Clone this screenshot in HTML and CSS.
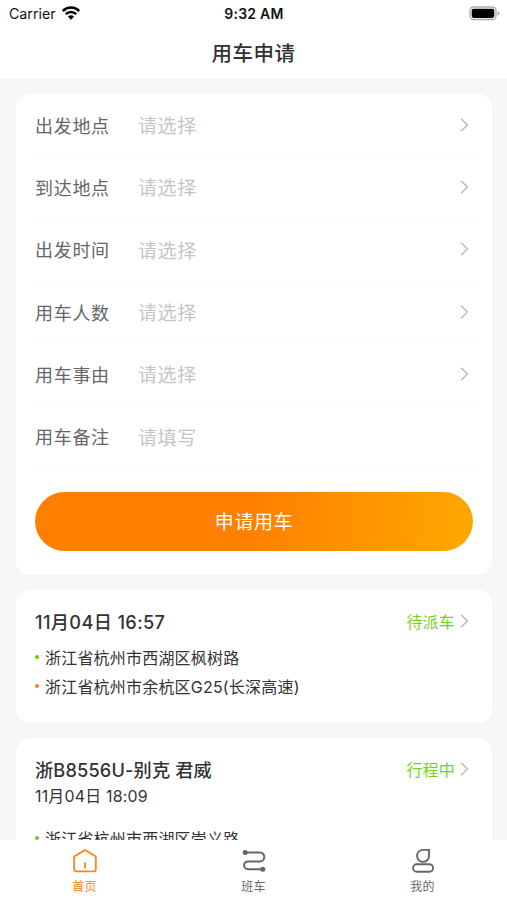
FILE: index.html
```html
<!DOCTYPE html>
<html lang="zh-CN">
<head>
<meta charset="utf-8">
<meta name="viewport" content="width=device-width, initial-scale=1">
<title>用车申请</title>
<link rel="stylesheet" href="styles.css">
</head>
<body>
<svg width="0" height="0" class="defs">
  <symbol id="chevron" viewBox="0 0 9 14"><path d="M1 .7 7.5 7 1 13.3" fill="none" stroke="#b3b3b3" stroke-width="1.2"/></symbol>
</svg>
<div class="app">
  <header class="top">
    <div class="status">
      <div class="carrier"><span>Carrier</span>
        <svg width="18" height="14" viewBox="0 0 18 14" fill="none" stroke="#000" stroke-width="2.5"><path d="M.8 5C5.400.4 12.600.4 17.200 5M3.800 8.200C6.700 5.300 11.300 5.300 14.200 8.200"/><path d="M9 13.700 5.900 10.600Q9 8 12.100 10.600Z" fill="#000" stroke="none"/></svg>
      </div>
      <div class="clock">9:32 AM</div>
      <svg class="battery" width="31" height="15" viewBox="0 0 31 15"><rect x="1" y="1" width="26" height="12.500" rx="3.500" fill="#fff" stroke="#aaa" stroke-width="1.300"/><rect x="2.700" y="2.700" width="22.600" height="9.200" rx="1.800"/><path d="M28.500 5v4.600q2-.7 2-2.300t-2-2.300z" fill="#aaa"/></svg>
    </div>
    <h1>用车申请</h1>
  </header>
  <main>
    <section class="card form">
      <div class="row"><label>出发地点</label><span>请选择</span><svg class="chev"><use href="#chevron"/></svg></div>
      <div class="row"><label>到达地点</label><span>请选择</span><svg class="chev"><use href="#chevron"/></svg></div>
      <div class="row"><label>出发时间</label><span>请选择</span><svg class="chev"><use href="#chevron"/></svg></div>
      <div class="row"><label>用车人数</label><span>请选择</span><svg class="chev"><use href="#chevron"/></svg></div>
      <div class="row"><label>用车事由</label><span>请选择</span><svg class="chev"><use href="#chevron"/></svg></div>
      <div class="row"><label>用车备注</label><span>请填写</span></div>
      <button>申请用车</button>
    </section>
    <section class="card trip">
      <div class="head"><h2>11月04日 16:57</h2><span class="state">待派车</span><svg class="chev"><use href="#chevron"/></svg></div>
      <ul>
        <li>浙江省杭州市西湖区枫树路</li>
        <li class="to">浙江省杭州市余杭区G25(长深高速)</li>
      </ul>
    </section>
    <section class="card trip">
      <div class="head"><h2 class="plate">浙B8556U-别克 君威</h2><span class="state">行程中</span><svg class="chev"><use href="#chevron"/></svg></div>
      <p>11月04日 18:09</p>
      <ul>
        <li>浙江省杭州市西湖区崇义路</li>
      </ul>
    </section>
  </main>
  <nav>
    <a class="active"><svg width="26" height="26" viewBox="0 0 26 26" fill="none" stroke="currentColor" stroke-width="1.800" stroke-linejoin="round"><path d="M2.200 8.600 13 2.100 23.800 8.600V21.300a2 2 0 0 1-2 2H4.200a2 2 0 0 1-2-2ZM13 14.500v6"/></svg><span>首页</span></a>
    <a><svg width="26" height="26" viewBox="0 0 26 26" fill="none" stroke="currentColor" stroke-width="2"><path d="M4 4.400H18.800a4.500 4.500 0 0 1 0 9H7a3.900 3.900 0 0 0 0 7.800H22"/><circle cx="4.200" cy="4.400" r="2.500" fill="currentColor" stroke="none"/><circle cx="21.800" cy="21.200" r="2.500" fill="currentColor" stroke="none"/></svg><span>班车</span></a>
    <a><svg width="26" height="26" viewBox="0 0 26 26" fill="none" stroke="currentColor" stroke-width="1.900"><path d="M13.500 1.900H19V7.900a6 6 0 1 1-5.500-6Z"/><rect x="3.100" y="16.200" width="20" height="7.500" rx="3.750"/></svg><span>我的</span></a>
  </nav>
</div>
</body>
</html>
```
FILE: styles.css
```css
* { box-sizing: border-box; }
body { margin: 0; background: #f6f6f6; color: #333; font-family: Inter, "Noto Sans CJK SC", sans-serif; }
h1, h2, p, ul { margin: 0; padding: 0; font-weight: 500; }
.defs { position: absolute; }
.app { height: 900px; display: flex; flex-direction: column; overflow: hidden; }
.top { height: 79px; flex: none; background: #fff; }
.status { height: 27px; padding: 0 7px 0 9px; display: grid; grid-template-columns: 1fr auto 1fr; align-items: center; color: #111; }
.carrier { display: flex; align-items: center; gap: 6px; font-size: 14.2px; letter-spacing: 0; }
.carrier svg { margin-top: -2px; }
.clock { font-size: 14px; font-weight: 600; letter-spacing: .25px; margin-right: 1px; }
.battery { justify-self: end; }
h1 { font-size: 20.5px; letter-spacing: .5px; line-height: 54px; text-align: center; }
main { flex: 1; min-height: 0; overflow: hidden; padding: 15px 15px 0 16px; display: flex; flex-direction: column; gap: 15px; }
.card { flex: none; background: #fff; border-radius: 14px; padding: 0 19px; }
.form { height: 481px; }
.row { height: 62.300px; margin: 0 -4px; padding: 0 4px; display: flex; align-items: center; border-bottom: 1px solid #fafafa; font-size: 18px; }
.row label { width: 103px; color: #666; letter-spacing: .7px; }
.row span { flex: 1; color: #c5c5c5; font-size: 19px; letter-spacing: .6px; }
.chev { width: 9px; height: 14px; margin-right: 4px; flex: none; }
button { display: block; width: 100%; height: 59px; margin-top: 24px; border: 0; border-radius: 30px; background: linear-gradient(100deg, #ff7f00 48%, #ffa700 98%); color: #fff; font: 400 19px/61px Inter, "Noto Sans CJK SC", sans-serif; letter-spacing: .6px; padding: 0; }
.trip { height: 133px; padding-top: 17px; font-size: 16px; }
.head { height: 27px; display: flex; align-items: center; }
h2 { flex: 1; font-size: 18.2px; letter-spacing: .35px; }
.plate { letter-spacing: .15px; }
.state { color: #74d41b; letter-spacing: .2px; margin-right: 5px; }
ul { list-style: none; padding-top: 8px; }
li { height: 29px; display: flex; align-items: center; gap: 6px; white-space: nowrap; letter-spacing: .2px; font-weight: 400; }
li::before { content: ""; width: 4px; height: 4px; border-radius: 50%; background: #66cf14; }
.to::before { background: #ff7d27; }
p { height: 28px; line-height: 30px; font-size: 15.900px; font-weight: 400; letter-spacing: .22px; }
p + ul { padding-top: 13px; }
nav { height: 60px; flex: none; background: #fff; display: grid; grid-template-columns: repeat(3, 1fr); }
nav a { display: flex; flex-direction: column; align-items: center; padding-top: 8px; color: #666; }
nav span { font-size: 12px; line-height: 18px; margin-top: 4px; letter-spacing: .2px; }
nav .active { color: #ff8412; }
```
